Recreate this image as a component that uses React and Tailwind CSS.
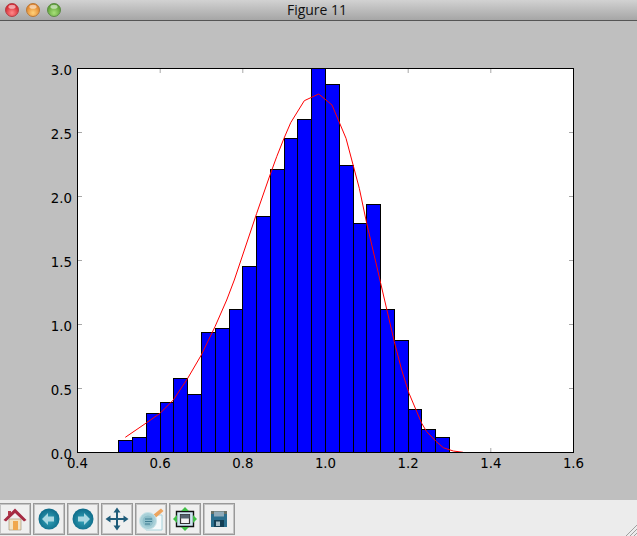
const EDGES = [118, 132, 146, 160, 173, 187, 201, 215, 229, 242, 256, 270, 284, 297, 311, 325, 339, 353, 366, 380, 394, 408, 421, 435, 449]
const TOPS = [440, 437, 413, 402, 378, 394, 332, 328, 309, 266, 216, 169, 138, 119, 68, 84, 165, 223, 204, 309, 340, 409, 429, 437]
const CURVE = '125.3,437.3 146.7,422.7 160,413.3 173.3,400 187.7,378.3 201.3,355 215,326.7 226.7,300 234.3,280 256.7,213.3 270,175 276.7,156.7 284,138.3 290.7,122.7 304.3,100.7 318.7,94 332,105 346,138.3 359.3,188.3 366.7,223.3 375.3,260 380.7,283.3 394.3,341.7 401.7,370 409,393.3 421.7,423.3 426.7,431.7 435.7,441 443.3,447.7 453.3,451 463,452.3'
const X_TICKS = [
  [77.5, '0.4'], [160.2, '0.6'], [242.8, '0.8'], [325.5, '1.0'],
  [408.2, '1.2'], [490.8, '1.4'], [573.5, '1.6'],
]
const Y_TICKS = [
  [452.5, '0.0'], [388.5, '0.5'], [324.5, '1.0'], [260.5, '1.5'],
  [196.5, '2.0'], [132.5, '2.5'], [68.5, '3.0'],
]

function Chart() {
  return (
    <svg viewBox="0 21 637 479" className="block w-[637px] h-[479px]">
      <rect x="77.5" y="68.5" width="496" height="384" fill="#fff" />
      {X_TICKS.map(([x]) => (
        <g key={x} stroke="#a8a8a8">
          <path d={`M${x} 452V448M${x} 69V73`} />
        </g>
      ))}
      {Y_TICKS.map(([y]) => (
        <g key={y} stroke="#a8a8a8">
          <path d={`M78 ${y}H82M573 ${y}H569`} />
        </g>
      ))}
      {TOPS.map((top, i) => (
        <rect
          key={i}
          x={EDGES[i] + 0.5}
          y={top + 0.5}
          width={EDGES[i + 1] - EDGES[i]}
          height={452 - top}
          fill="#0000ff"
          stroke="#000"
        />
      ))}
      <polyline points={CURVE} fill="none" stroke="#ff0000" strokeWidth="1" strokeLinejoin="round" />
      <rect x="77.5" y="68.5" width="496" height="384" fill="none" stroke="#000" />
      <g className="font-['DejaVu_Sans',sans-serif] text-[13.33px]" fill="#000">
        {X_TICKS.map(([x, label]) => (
          <text key={label} x={x} y="468" textAnchor="middle">{label}</text>
        ))}
        {Y_TICKS.map(([y, label]) => (
          <text key={label} x="72" y={y + 6.5} textAnchor="end">{label}</text>
        ))}
      </g>
    </svg>
  )
}

function Light({ from, to, edge }) {
  return (
    <svg viewBox="0 0 14 14" className="w-[14px] h-[14px]">
      <defs>
        <radialGradient id={`light-${edge.slice(1)}`} cx="50%" cy="72%" r="60%">
          <stop offset="0" stopColor={from} />
          <stop offset="1" stopColor={to} />
        </radialGradient>
      </defs>
      <circle cx="7" cy="7" r="6.5" fill={`url(#light-${edge.slice(1)})`} stroke={edge} strokeWidth="1" />
      <ellipse cx="7" cy="3.7" rx="3.6" ry="2" fill="#fff" opacity="0.55" />
    </svg>
  )
}

function ToolButton({ children, className = '' }) {
  return (
    <div className={`w-8 h-8 border border-[#999] shadow-[inset_0_0_0_1px_#c4c4c4] bg-[#efefef] flex items-center justify-center shrink-0 ${className}`}>
      {children}
    </div>
  )
}

function HomeIcon() {
  return (
    <svg viewBox="0 0 24 24" className="w-6 h-6">
      <path d="M6 12H18V23H6Z" fill="#f3e3c4" stroke="#a89a80" strokeWidth="0.7" />
      <path d="M10 14H15V23H10Z" fill="#f0a84e" />
      <path d="M5 4H8V8H5Z" fill="#b33a4a" />
      <path d="M0.5 13L12 1.5L23.5 13L21 14.5L12 6L3 14.5Z" fill="#a52a42" />
    </svg>
  )
}

function ArrowIcon({ flip }) {
  return (
    <svg viewBox="0 0 22 22" className="w-[22px] h-[22px]">
      <defs>
        <radialGradient id={flip ? 'nav-r' : 'nav-l'} cx="50%" cy="55%" r="55%">
          <stop offset="0" stopColor="#35a5bb" />
          <stop offset="1" stopColor="#0d6a88" />
        </radialGradient>
      </defs>
      <circle cx="11" cy="11" r="10.5" fill={`url(#${flip ? 'nav-r' : 'nav-l'})`} />
      <path
        d={flip ? 'M12 5L18 11L12 17V13.5H6V8.5H12Z' : 'M10 5L4 11L10 17V13.5H16V8.5H10Z'}
        fill="#a9d8e2"
      />
    </svg>
  )
}

function MoveIcon() {
  return (
    <svg viewBox="0 0 24 24" className="w-6 h-6" fill="#1f5c7a">
      <path d="M11 5H13V19H11ZM5 11H19V13H5Z" />
      <path d="M12 0.5L15.5 5.5H8.5ZM12 23.5L8.5 18.5H15.5ZM0.5 12L5.5 8.5V15.5ZM23.5 12L18.5 15.5V8.5Z" />
    </svg>
  )
}

function EditIcon() {
  return (
    <svg viewBox="0 0 26 24" className="w-[26px] h-6">
      <path d="M8 8H24V23H8Z" fill="#f4fafb" stroke="#a8d3dc" strokeWidth="1" />
      <path d="M15 8L23 1.5L25.5 4L18 10.5Z" fill="#eda45e" />
      <circle cx="10" cy="14" r="8.5" fill="#a8d0d8" stroke="#c9e2e7" strokeWidth="1" />
      <circle cx="10" cy="14" r="5.5" fill="#8fbfca" />
      <path d="M7 12H14M7 14.5H14M7 17H12" stroke="#3f7d92" strokeWidth="1" />
    </svg>
  )
}

function SubplotsIcon() {
  return (
    <svg viewBox="0 0 24 24" className="w-6 h-6">
      <path d="M3.5 4.5H20.5V19.5H3.5Z" fill="#cfe6f0" stroke="#111" strokeWidth="1.4" />
      <path d="M7.5 7.5H16.5V16.5H7.5Z" fill="#f2f2f2" stroke="#333" strokeWidth="1.2" />
      <path d="M7.5 7.5H16.5V11.5H7.5Z" fill="#55626d" />
      <path d="M12 0L16 4H8ZM12 24L8 20H16ZM0 12L4 8V16ZM24 12L20 16V8Z" fill="#3fbf45" />
    </svg>
  )
}

function SaveIcon() {
  return (
    <svg viewBox="0 0 18 18" className="w-[18px] h-[18px]">
      <path d="M1 1H17V17H1Z" fill="#2b6f8e" />
      <path d="M1 1H17V4H1Z" fill="#a9763f" opacity="0.5" />
      <path d="M4 1.5H14V6.5H4Z" fill="#8fabb9" />
      <path d="M4 10H14V17H4Z" fill="#143f55" />
      <path d="M6 11.5H10V16H6Z" fill="#a9c0ca" />
    </svg>
  )
}

export default function App() {
  return (
    <div className="w-[637px] h-[536px] flex flex-col overflow-hidden bg-[#bfbfbf]">
      <div className="relative h-[21px] shrink-0 flex items-center gap-[7px] pl-[5px] border-b border-[#555] bg-gradient-to-b from-[#d2d2d2] to-[#a6a6a6]">
        <Light from="#ff8a8a" to="#d3222c" edge="#b04048" />
        <Light from="#ffd27a" to="#e0822a" edge="#b87a3a" />
        <Light from="#a8e07a" to="#5a9e32" edge="#5d8a48" />
        <span className="absolute inset-x-0 top-0 h-5 leading-5 pr-[3px] text-center text-[14px] text-[#111] font-['Open_Sans',sans-serif]">
          Figure 11
        </span>
      </div>
      <Chart />
      <div className="relative flex-1 flex items-start gap-[2px] pt-[3px] bg-[#ececec]">
        <ToolButton className="ml-[-1px]"><HomeIcon /></ToolButton>
        <ToolButton><ArrowIcon /></ToolButton>
        <ToolButton><ArrowIcon flip /></ToolButton>
        <ToolButton><MoveIcon /></ToolButton>
        <ToolButton><EditIcon /></ToolButton>
        <ToolButton><SubplotsIcon /></ToolButton>
        <ToolButton><SaveIcon /></ToolButton>
        <svg viewBox="0 0 12 12" className="absolute right-0 bottom-0 w-3 h-3" stroke="#a0a0a0">
          <path d="M12 1L1 12M12 5L5 12M12 9L9 12" />
        </svg>
      </div>
    </div>
  )
}
